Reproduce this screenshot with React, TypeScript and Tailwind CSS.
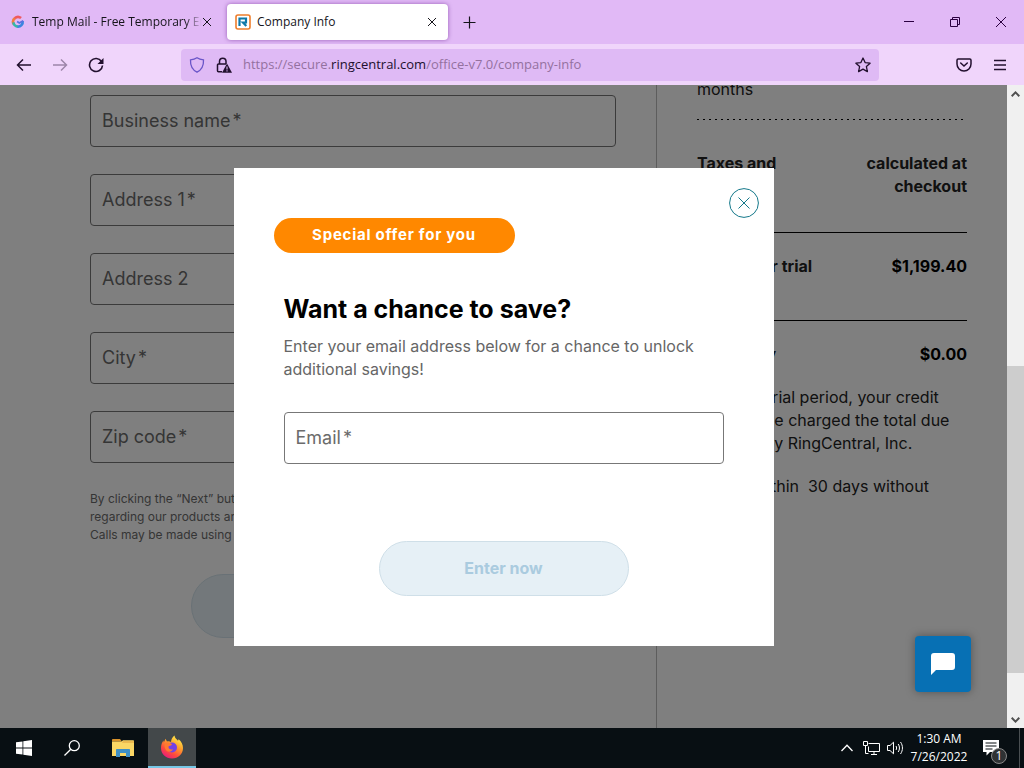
import React from "react";

const fields = [
  { id: "business", label: "Business name", required: true },
  { id: "address1", label: "Address 1", required: true },
  { id: "address2", label: "Address 2", required: false },
  { id: "city", label: "City", required: true },
  { id: "zip", label: "Zip code", required: true },
];

function Field({ id, label, required }: { id: string; label: string; required: boolean }) {
  return (
    <div className="relative">
      <input
        id={id}
        type="text"
        className="block h-[52px] w-full rounded border border-[#777] bg-white px-3 text-lg outline-none"
      />
      <label
        htmlFor={id}
        className="pointer-events-none absolute inset-y-0 left-3 flex items-center text-lg text-[#6b6b6b]"
      >
        {label}
        {required && <span className="ml-0.5">*</span>}
      </label>
    </div>
  );
}

function TabStrip() {
  return (
    <div className="flex h-11 items-center bg-[#e1b9f6] text-xs text-[#15141a]">
      <div className="flex h-9 w-[227px] items-center pl-[11px] pr-2">
        <svg viewBox="0 0 16 16" className="mr-[7px] size-3.5 shrink-0" fill="none" strokeWidth="3">
          <path d="M3 10.500A5.500 5.500 0 0 1 4.500 3.600" stroke="#f0803c" />
          <path d="M4.300 3.800A5.500 5.500 0 0 1 11.500 3.500" stroke="#ef5a5f" />
          <path d="M2.800 8.500A5.300 5.300 0 0 0 8 13.300" stroke="#35b6a8" />
          <path d="M7.500 13.300A5.400 5.400 0 0 0 13.300 7" stroke="#3b86e0" />
          <path d="M7 7.500l2.500 1.700L14 6.500" stroke="#5a6fe0" strokeWidth="2" />
        </svg>
        <span className="w-[170px] overflow-hidden whitespace-nowrap [mask-image:linear-gradient(90deg,#000_90%,transparent)]">
          Temp Mail - Free Temporary Email
        </span>
        <button aria-label="Close tab" className="shrink-0">
          <svg viewBox="0 0 10 10" className="size-2.5" stroke="currentColor" fill="none">
            <path d="M1 1l8 8M9 1l-8 8" />
          </svg>
        </button>
      </div>
      <div className="flex h-9 w-[221px] items-center rounded bg-white pl-2 pr-[11px] shadow-[0_0_4px_rgba(80,0,120,0.5)]">
        <svg viewBox="0 0 16 16" className="mr-1.5 size-4" fill="none">
          <rect x="1" y="1" width="14" height="14" rx="2" fill="#fff" stroke="#ee7d2b" strokeWidth="1.600" />
          <path d="M4.500 12V4.500h6.500v4H8l3.300 3.500" stroke="#0f78a8" strokeWidth="2.200" />
        </svg>
        <span className="flex-1">Company Info</span>
        <button aria-label="Close tab">
          <svg viewBox="0 0 10 10" className="size-2.5" stroke="currentColor" fill="none">
            <path d="M1 1l8 8M9 1l-8 8" />
          </svg>
        </button>
      </div>
      <button aria-label="New tab" className="ml-[15px]">
        <svg viewBox="0 0 13 13" className="size-[13px]" stroke="currentColor" strokeWidth="1.200">
          <path d="M6.500 .5v12M.5 6.500h12" />
        </svg>
      </button>
      <div className="ml-auto flex items-center gap-9 pr-[18px]">
        <button aria-label="Minimize">
          <svg viewBox="0 0 10 10" className="size-2.5" stroke="#2b0040">
            <path d="M0 4.500h10" />
          </svg>
        </button>
        <button aria-label="Restore">
          <svg viewBox="0 0 10 10" className="size-2.5" stroke="#2b0040" fill="none">
            <path d="M.5 2.500h7v7h-7zM2.500 2.500v-2h7v7h-2" />
          </svg>
        </button>
        <button aria-label="Close window">
          <svg viewBox="0 0 10 10" className="size-2.5" stroke="#2b0040">
            <path d="M0 0l10 10M10 0L0 10" />
          </svg>
        </button>
      </div>
    </div>
  );
}

function NavBar() {
  return (
    <div className="flex h-[41px] items-center bg-[#f0d5fb] pl-4 pr-[18px] text-[#22102e]">
      <div className="flex items-center gap-5">
        <button aria-label="Back">
          <svg viewBox="0 0 16 16" className="size-4" stroke="currentColor" strokeWidth="1.500" fill="none">
            <path d="M15 8H1.500M7 2.500L1.500 8 7 13.500" />
          </svg>
        </button>
        <button aria-label="Forward" className="opacity-40">
          <svg viewBox="0 0 16 16" className="size-4" stroke="currentColor" strokeWidth="1.500" fill="none">
            <path d="M1 8h13.500M9 2.500L14.500 8 9 13.500" />
          </svg>
        </button>
        <button aria-label="Reload">
          <svg viewBox="0 0 16 16" className="size-4" fill="none">
            <path d="M13.500 4.500A6.500 6.500 0 1 0 14.500 8.500" stroke="currentColor" strokeWidth="1.600" />
            <path d="M15.500 1v6h-6z" fill="currentColor" />
          </svg>
        </button>
      </div>
      <div className="mx-[77px] flex h-8 flex-1 items-center rounded bg-[#dfbaf5] px-2">
        <svg viewBox="0 0 16 16" className="size-4" fill="none" stroke="#6a55c8" strokeWidth="1.300">
          <path d="M8 .8c2 1.400 4 1.900 6.500 2.100C14.800 9 12.500 13 8 15.200 3.500 13 1.200 9 1.500 2.900 4 2.700 6 2.200 8 .8z" />
        </svg>
        <svg viewBox="0 0 16 16" className="ml-[11px] size-4" fill="none" stroke="currentColor" strokeWidth="1.500">
          <path d="M3.500 7V4.500a3.200 3.200 0 0 1 6.500 0V7M6 14.800H2.500a1 1 0 0 1-1-1V8a1 1 0 0 1 1-1H10" />
          <path d="M11 6.500l5 9.300H6z" fill="currentColor" stroke="none" />
          <path d="M11 9.500v3M11 13.300v1.200" stroke="#dfbaf5" strokeWidth="1.100" />
        </svg>
        <div className="relative ml-[11px] h-full flex-1 text-[13px]">
          <input id="url" type="text" className="h-full w-full bg-transparent outline-none" />
          <label
            htmlFor="url"
            className="pointer-events-none absolute inset-0 flex items-center whitespace-nowrap text-[#94719f]"
          >
            https://secure.<span className="text-[#22102e]">ringcentral.com</span>/office-v7.0/company-info
          </label>
        </div>
        <button aria-label="Bookmark this page">
          <svg viewBox="0 0 16 16" className="size-4" fill="none" stroke="currentColor" strokeWidth="1.300" strokeLinejoin="round">
            <path d="M8 1l2.100 4.600 5 .6-3.700 3.400 1 5L8 12.100l-4.400 2.500 1-5L.9 6.200l5-.6z" />
          </svg>
        </button>
      </div>
      <div className="flex items-center gap-[22px]">
        <button aria-label="Save to Pocket">
          <svg viewBox="0 0 16 16" className="size-4" fill="none" stroke="currentColor" strokeWidth="1.500" strokeLinecap="round">
            <path d="M2.200 2h11.600c.7 0 1.200.5 1.200 1.200V7A7 7 0 0 1 1 7V3.200C1 2.500 1.500 2 2.200 2zM4.700 6L8 9l3.300-3" />
          </svg>
        </button>
        <button aria-label="Open menu">
          <svg viewBox="0 0 12 12" className="size-3" stroke="currentColor" strokeWidth="1.300">
            <path d="M0 1.500h12M0 6h12M0 10.500h12" />
          </svg>
        </button>
      </div>
    </div>
  );
}

function CompanyForm() {
  return (
    <form className="flex min-w-0 flex-1 flex-col pl-[90px] pr-10 pt-2.5">
      <div className="flex flex-col gap-[27px]">
        {fields.map((f) => (
          <Field key={f.id} {...f} />
        ))}
      </div>
      <p className="mt-[27px] whitespace-nowrap text-xs leading-[18px] text-[#6b6b6b]">
        By clicking the “Next” button, you agree to receive calls and texts
        <br />
        regarding our products and services at the number provided.
        <br />
        Calls may be made using automated technology.
      </p>
      <button
        type="button"
        disabled
        className="mt-[30px] h-16 w-[324px] self-center rounded-full border border-[#d3e3ec] bg-[#e6f0f6] text-lg font-bold text-[#aacbdf]"
      >
        Next
      </button>
    </form>
  );
}

function Summary() {
  return (
    <aside className="w-[351px] shrink-0 border-l border-[#bbb] px-10 leading-[23px] text-[#222]">
      <p className="-mt-[7px]">months</p>
      <div className="mt-[18px] h-px bg-[repeating-linear-gradient(90deg,#000_0_2px,transparent_2px_6px)]" />
      <div className="flex justify-between border-b border-black pb-[34px] pt-8 font-bold">
        <span className="w-[110px]">Taxes and fees</span>
        <span className="w-[130px] text-right">calculated at checkout</span>
      </div>
      <div className="flex justify-between border-b border-black pb-[42px] pt-[22px] font-bold">
        <span>Price after trial</span>
        <span className="text-black">$1,199.40</span>
      </div>
      <div className="flex justify-between pt-[22px] font-bold">
        <span>Due today</span>
        <span className="text-black">$0.00</span>
      </div>
      <p className="mt-5 whitespace-nowrap">
        After the trial period, your credit
        <br />
        card will be charged the total due
        <br />
        annually by RingCentral, Inc.
      </p>
      <p className="mt-5 whitespace-pre">Cancel within  30 days without</p>
    </aside>
  );
}

function OfferDialog() {
  return (
    <div className="absolute inset-0 flex items-center justify-center bg-black/50">
      <div role="dialog" aria-labelledby="offer-title" className="relative flex w-[540px] flex-col bg-white p-[50px]">
        <button aria-label="Close" className="absolute right-[15px] top-5">
          <svg viewBox="0 0 30 30" className="size-[30px]" fill="none" stroke="#14788a">
            <circle cx="15" cy="15" r="14.400" />
            <path d="M9.500 9.500l11 11M20.500 9.500l-11 11" />
          </svg>
        </button>
        <span className="-ml-2.5 flex h-[35px] w-[241px] items-center justify-center rounded-full bg-[#ff8800] text-[15px] font-bold tracking-wider text-white">
          Special offer for you
        </span>
        <h2 id="offer-title" className="mt-10 text-[25px] font-bold leading-8 text-black">
          Want a chance to save?
        </h2>
        <p className="mt-2.5 leading-[23px] text-[#666]">
          Enter your email address below for a chance to unlock additional savings!
        </p>
        <div className="mt-[31px]">
          <Field id="email" label="Email" required />
        </div>
        <button
          disabled
          className="mt-[77px] h-[55px] w-[250px] self-center rounded-full border border-[#cfdfe8] bg-[#e6f0f6] font-bold text-[#aacbdf]"
        >
          Enter now
        </button>
      </div>
    </div>
  );
}

function Scrollbar() {
  return (
    <div className="flex w-[17px] shrink-0 flex-col bg-[#f0f0f0]">
      <div className="flex h-[17px] items-center justify-center">
        <svg viewBox="0 0 9 6" className="h-1.5 w-[9px]" fill="none" stroke="#505050" strokeWidth="2">
          <path d="M.7 5.200l3.800-3.800 3.800 3.800" />
        </svg>
      </div>
      <div className="flex-[264]" />
      <div className="flex-[307] bg-[#cdcdcd]" />
      <div className="flex-[38]" />
      <div className="flex h-[17px] items-center justify-center">
        <svg viewBox="0 0 9 6" className="h-1.5 w-[9px]" fill="none" stroke="#505050" strokeWidth="2">
          <path d="M.7 .8l3.800 3.800L8.300 .8" />
        </svg>
      </div>
    </div>
  );
}

function Taskbar() {
  return (
    <div className="flex h-10 items-center bg-[#080f13] text-white">
      <button aria-label="Start" className="flex h-10 w-12 items-center justify-center">
        <svg viewBox="0 0 16 16" className="size-4" fill="#fff">
          <path d="M0 2.300l6.500-.9v6.200H0zM7.300 1.300L16 0v7.600H7.300zM0 8.400h6.500v6.200L0 13.700zM7.300 8.400H16V16l-8.700-1.200z" />
        </svg>
      </button>
      <button aria-label="Search" className="flex h-10 w-12 items-center justify-center">
        <svg viewBox="0 0 16 16" className="size-4" fill="none" stroke="#fff" strokeWidth="1.300">
          <circle cx="10.300" cy="5.700" r="5" />
          <path d="M6.800 9.200L.5 15.500" />
        </svg>
      </button>
      <button aria-label="File Explorer" className="flex h-10 w-[52px] items-center justify-center pl-0.5">
        <svg viewBox="0 0 22 18" className="h-[18px] w-[22px]">
          <path d="M0 1.200C0 .5.400 0 1 0h7l2 2.500H0z" fill="#d9922b" />
          <path d="M0 2.500h9.500L11 1.200h10c.6 0 1 .4 1 1V17H0z" fill="#fbd765" />
          <path d="M10 3.800h12V2.200H11z" fill="#e8b04a" />
          <path d="M4 18v-7c0-.6.400-1 1-1h12c.6 0 1 .4 1 1v7h-4v-4H8v4z" fill="#3f8fc4" />
        </svg>
      </button>
      <button aria-label="Firefox" className="flex h-10 w-12 items-center justify-center border-b-2 border-[#76c7e6] bg-[#43484a]">
        <svg viewBox="0 0 24 24" className="size-6">
          <defs>
            <linearGradient id="flame" x1="0.800" y1="0" x2="0.200" y2="1">
              <stop offset="0.050" stopColor="#fff04a" />
              <stop offset="0.400" stopColor="#ff9a2c" />
              <stop offset="0.700" stopColor="#ff4a3d" />
              <stop offset="1" stopColor="#e31587" />
            </linearGradient>
          </defs>
          <path
            d="M14.500 .5c.3 2.500 2 3.600 3.500 5.200l.6-1.500c2.800 2.200 4.400 5.400 4.400 8.800 0 6-4.900 10.500-11 10.500S1 19 1 13c0-3.200 1-5.800 2.500-7.500l.3 2 1.700-3.800 1.500 2.800c1.500-.3 3-.1 4 .5.200-2.700 1.500-5 3.500-6.500z"
            fill="url(#flame)"
          />
          <circle cx="12" cy="12.500" r="5" fill="#7542e5" />
          <path d="M5 8c2.500-1 5-.5 7 1.200-.5 1.500-3 1.500-3.500 2.300-.3 2.500 2 3.500 4.500 2.700-1 2.500-4.500 3.300-6.500 1.500C4.500 13.800 4 10.500 5 8z" fill="#ff7a30" />
        </svg>
      </button>
      <div className="ml-auto flex h-10 items-center pr-1">
        <button aria-label="Show hidden icons">
          <svg viewBox="0 0 12 8" className="h-2 w-3" fill="none" stroke="#fff" strokeWidth="1.300">
            <path d="M.5 7L6 1.200 11.500 7" />
          </svg>
        </button>
        <svg viewBox="0 0 17 14" className="ml-2.5 h-3.5 w-[17px]" fill="none" stroke="#fff">
          <path d="M5.500 2.500h11v8h-11v-5M8 13.500h6M11 10.500v3M.5 .5h4v4h-4zM2.500 4.500v8h3" />
        </svg>
        <svg viewBox="0 0 17 14" className="ml-[7px] h-3.5 w-[17px]" fill="none" stroke="#fff">
          <path d="M.5 4.500h2.500l3.500-3.300v11.600L3 9.500H.5zM9 5c.8 1.200.8 2.800 0 4M11.200 3c1.700 2.400 1.700 5.600 0 8M13.500 1c2.600 3.600 2.600 8.400 0 12" />
        </svg>
        <div className="ml-[9px] w-[52px] whitespace-nowrap text-xs leading-[18px]">
          <div className="flex justify-center">1:30 AM</div>
          <div className="flex justify-center">7/26/2022</div>
        </div>
        <button aria-label="Notifications" className="relative ml-[18px] mr-5">
          <svg viewBox="0 0 16 16" className="size-4">
            <path d="M0 0h16v12H7l-3.500 3.500V12H0z" fill="#fff" />
            <path d="M2.500 3h11M2.500 6h11M2.500 9h7" stroke="#080f13" />
          </svg>
          <span className="absolute left-2 top-2 flex size-4 items-center justify-center rounded-full border border-[#888] bg-[#2f3234] text-xs">
            1
          </span>
        </button>
        <div className="h-10 w-px bg-[#4a4f52]" />
      </div>
    </div>
  );
}

export default function App() {
  return (
    <div className="flex h-screen flex-col overflow-hidden font-['Open_Sans',sans-serif]">
      <TabStrip />
      <NavBar />
      <div className="flex min-h-0 flex-1">
        <main className="relative flex min-w-0 flex-1 overflow-hidden bg-white font-['Inter',sans-serif]">
          <CompanyForm />
          <Summary />
          <OfferDialog />
          <button
            aria-label="Open chat"
            className="absolute bottom-9 right-9 flex size-14 items-center justify-center rounded bg-[#0770b4] shadow-[0_0_10px_rgba(0,0,0,0.35)]"
          >
            <svg viewBox="0 0 24 22" className="h-[22px] w-6" fill="#fff">
              <path d="M3 0h18a3 3 0 0 1 3 3v11a3 3 0 0 1-3 3H5l-5 5V3a3 3 0 0 1 3-3z" />
            </svg>
          </button>
        </main>
        <Scrollbar />
      </div>
      <Taskbar />
    </div>
  );
}
